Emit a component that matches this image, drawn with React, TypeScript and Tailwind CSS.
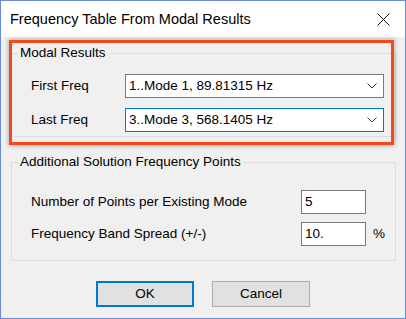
import React from "react";

const font = { fontFamily: '"Segoe UI", "Liberation Sans", Arial, sans-serif' };

function Chevron() {
  return (
    <svg width="10" height="6" viewBox="0 0 10 6" className="shrink-0">
      <polyline points="0.5,0.5 5,5 9.5,0.5" fill="none" stroke="#3c3c3c" strokeWidth="1" />
    </svg>
  );
}

function Combo({ value, focused }: { value: string; focused?: boolean }) {
  return (
    <div
      className={`flex items-center justify-between w-[259px] h-[24px] bg-white pl-[3px] pr-[6px] border ${
        focused ? "border-[#0078d7]" : "border-[#7a7a7a]"
      }`}
    >
      <span className="text-[13.5px] leading-none text-black whitespace-nowrap">{value}</span>
      <Chevron />
    </div>
  );
}

function Row({ label, children }: { label: string; children: React.ReactNode }) {
  return (
    <div className="flex items-center h-[24px]">
      <span className="w-[94px] text-[13.5px] leading-none text-black whitespace-nowrap">{label}</span>
      {children}
    </div>
  );
}

export default function App() {
  return (
    <div
      className="relative w-[406px] h-[319px] border border-[#6a8bd2] bg-[#f0f0f0] flex flex-col overflow-hidden"
      style={font}
    >
      {/* Title bar */}
      <div className="h-[36px] bg-white flex items-center justify-between pl-[9px] pr-[15px] shrink-0">
        <span className="text-[14.5px] text-black leading-none">Frequency Table From Modal Results</span>
        <svg width="13" height="13" viewBox="0 0 13 13">
          <line x1="0.5" y1="0.5" x2="12.5" y2="12.5" stroke="#111" strokeWidth="1" />
          <line x1="12.5" y1="0.5" x2="0.5" y2="12.5" stroke="#111" strokeWidth="1" />
        </svg>
      </div>

      {/* Body */}
      <div className="flex flex-col pl-[10px] pt-[6px]">
        <fieldset className="w-[385px] h-[94px] border border-[#dcdcdc] pl-[19px] pt-[11px]">
          <legend className="-ml-[13px] px-[2px] text-[13.5px] leading-[20px] text-black">Modal Results</legend>
          <div className="flex flex-col gap-[10px]">
            <Row label="First Freq">
              <Combo value="1..Mode 1, 89.81315 Hz" />
            </Row>
            <Row label="Last Freq">
              <Combo value="3..Mode 3, 568.1405 Hz" focused />
            </Row>
          </div>
        </fieldset>

        <fieldset className="mt-[15px] w-[385px] h-[109px] border border-[#dcdcdc] pl-[19px] pt-[18px]">
          <legend className="-ml-[13px] px-[2px] text-[13.5px] leading-[20px] text-black">
            Additional Solution Frequency Points
          </legend>
          <div className="flex flex-col gap-[8px]">
            <div className="flex items-center h-[24px]">
              <span className="w-[270px] text-[13.5px] leading-none text-black whitespace-nowrap">
                Number of Points per Existing Mode
              </span>
              <div className="w-[65px] h-[24px] bg-white border border-[#7a7a7a] flex items-center pl-[3px] text-[13.5px] leading-none">
                5
              </div>
            </div>
            <div className="flex items-center h-[24px]">
              <span className="w-[270px] text-[13.5px] leading-none text-black whitespace-nowrap">
                Frequency Band Spread (+/-)
              </span>
              <div className="w-[65px] h-[24px] bg-white border border-[#7a7a7a] flex items-center pl-[3px] text-[13.5px] leading-none">
                10.
              </div>
              <span className="ml-[7px] text-[13.5px] leading-none text-black">%</span>
            </div>
          </div>
        </fieldset>

        <div className="flex gap-[18px] pl-[85px] mt-[20px]">
          <button className="w-[98px] h-[26px] bg-[#e1e1e1] border-2 border-[#0078d7] text-[13.5px] leading-none text-black">
            OK
          </button>
          <button className="w-[98px] h-[26px] bg-[#e1e1e1] border border-[#adadad] text-[13.5px] leading-none text-black">
            Cancel
          </button>
        </div>
      </div>

      {/* Highlight overlay */}
      <div className="absolute left-[8px] top-[39px] w-[385px] h-[105px] border-[3px] border-[#f5491a] shadow-[0_0_4px_1px_rgba(0,0,0,0.25)] pointer-events-none" />
    </div>
  );
}
